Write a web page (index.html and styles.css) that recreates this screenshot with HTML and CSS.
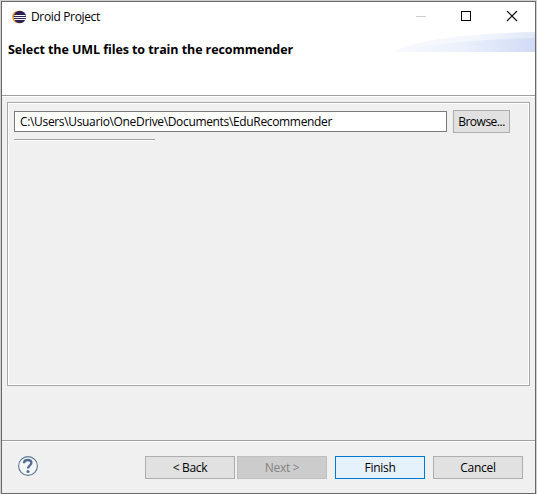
FILE: index.html
```html
<!DOCTYPE html>
<html lang="en">
<head>
<meta charset="utf-8">
<title>Droid Project</title>
<link rel="stylesheet" href="styles.css">
</head>
<body>
<div class="window">
  <header class="header">
    <div class="titlebar">
      <svg class="app-icon" width="15" height="14" viewBox="0 0 15 14">
        <circle cx="6.4" cy="7" r="6.2" fill="#f7941e"/>
        <circle cx="7.9" cy="7" r="6.2" fill="#2c2255"/>
        <path d="M2.2 5.5h11.4M1.7 7.5h12.4M2.2 9.5h11.4" stroke="#fff" stroke-width="1"/>
      </svg>
      <span class="title">Droid Project</span>
      <svg class="controls" width="102" height="12" viewBox="0 0 102 12" fill="none" shape-rendering="crispEdges">
        <path d="M0 5.5h10" stroke="#ccc"/>
        <path d="M45.5 .5h9v9h-9z" stroke="#000"/>
        <path d="M91 0l10 10M101 0l-10 10" stroke="#000" stroke-width="1.1" shape-rendering="auto"/>
      </svg>
    </div>
    <h1 class="heading">Select the UML files to train the recommender</h1>
    <svg class="swoosh" width="141" height="20" viewBox="0 0 141 20">
      <defs>
        <linearGradient id="back"><stop offset="0" stop-color="#f7f9fe"/><stop offset=".6" stop-color="#f3f6fd"/><stop offset="1" stop-color="#dfe8f8"/></linearGradient>
        <linearGradient id="front"><stop offset="0" stop-color="#f8faff"/><stop offset=".5" stop-color="#ebf0fb"/><stop offset="1" stop-color="#d1dbf5"/></linearGradient>
      </defs>
      <path d="M0 20C18 8 75 1 141 0V20z" fill="url(#back)"/>
      <path d="M0 20C30 13 80 7 141 6V20z" fill="url(#front)"/>
    </svg>
  </header>
  <main class="content">
    <section class="group">
      <div class="row">
        <div class="field">C:\Users\Usuario\OneDrive\Documents\EduRecommender</div>
        <button class="button browse">Browse...</button>
      </div>
      <div class="separator"></div>
    </section>
  </main>
  <footer class="footer">
    <svg class="help" width="20" height="20" viewBox="0 0 20 20" fill="none">
      <circle cx="10" cy="10" r="9.4" fill="#f3f5f8" stroke="#5c7594" stroke-width="1.1"/>
      <path d="M6 7.2C6 4.9 7.6 4 9.8 4C12 4 13.4 5 13.4 6.8C13.4 9.2 10.1 9.4 10.1 12.6" stroke="#526b92" stroke-width="2.3"/>
      <circle cx="10" cy="15.5" r="1.5" fill="#526b92"/>
    </svg>
    <button class="button">&lt; Back</button>
    <button class="button disabled" disabled>Next &gt;</button>
    <button class="button primary">Finish</button>
    <button class="button cancel">Cancel</button>
  </footer>
</div>
</body>
</html>
```
FILE: styles.css
```css
* { box-sizing: border-box; }
body {
  margin: 0;
  padding: 1px 1px 0;
  background: #cfcfcf;
  font: 12px/16px "Open Sans", "Noto Sans", sans-serif;
  color: #000;
}
.window {
  height: 493px;
  border: 1px solid #696969;
  background: #f0f0f0;
  display: flex;
  flex-direction: column;
}
.header {
  position: relative;
  height: 95px;
  flex: none;
  background: #fff;
  border-bottom: 1px solid #fff;
  box-shadow: inset 0 -1px #a0a0a0;
}
.titlebar { display: flex; align-items: center; height: 29px; padding: 0 17px 0 10px; }
.title { margin-left: 4px; letter-spacing: -0.35px; }
.controls { margin-left: auto; }
.heading {
  margin: 0;
  padding: 11px 0 0 6px;
  font-size: 12.5px;
  line-height: 16px;
  font-weight: 700;
  white-space: nowrap;
  letter-spacing: -0.08px;
}
.swoosh { position: absolute; right: 0; top: 30px; }
.content { flex: 1; padding: 5px 5px 0; }
.group {
  width: 523px;
  height: 284px;
  padding: 7px 6px;
  border: 1px solid #a7a8ab;
  box-shadow: inset 0 0 0 1px #fff;
}
.row { display: flex; align-items: center; gap: 6px; }
.field {
  width: 433px;
  height: 21px;
  padding: 2px 5px;
  border: 1px solid #7a7a7a;
  background: #fff;
  line-height: 16px;
  letter-spacing: -0.34px;
  white-space: nowrap;
}
.button {
  display: flex;
  align-items: center;
  justify-content: center;
  width: 90px;
  height: 23px;
  padding: 0;
  border: 1px solid #adadad;
  background: #e1e1e1;
  color: #000;
  font: inherit;
  letter-spacing: -0.3px;
  white-space: nowrap;
}
.browse { width: 57px; letter-spacing: -0.5px; }
.separator { width: 141px; height: 2px; margin-top: 6px; background: #a0a0a0; border-bottom: 1px solid #fff; }
.footer {
  display: flex;
  height: 53px;
  flex: none;
  padding: 15px 12px 0 16px;
  border-top: 1px solid #a0a0a0;
  box-shadow: inset 0 1px #fff;
}
.help { margin-right: 107px; }
.disabled { margin: 0 8px 0 2px; background: #ccc; border-color: #bfbfbf; color: #838383; }
.primary { border-color: #0078d7; background: #e5f1fb; }
.cancel { margin-left: 8px; }
```
